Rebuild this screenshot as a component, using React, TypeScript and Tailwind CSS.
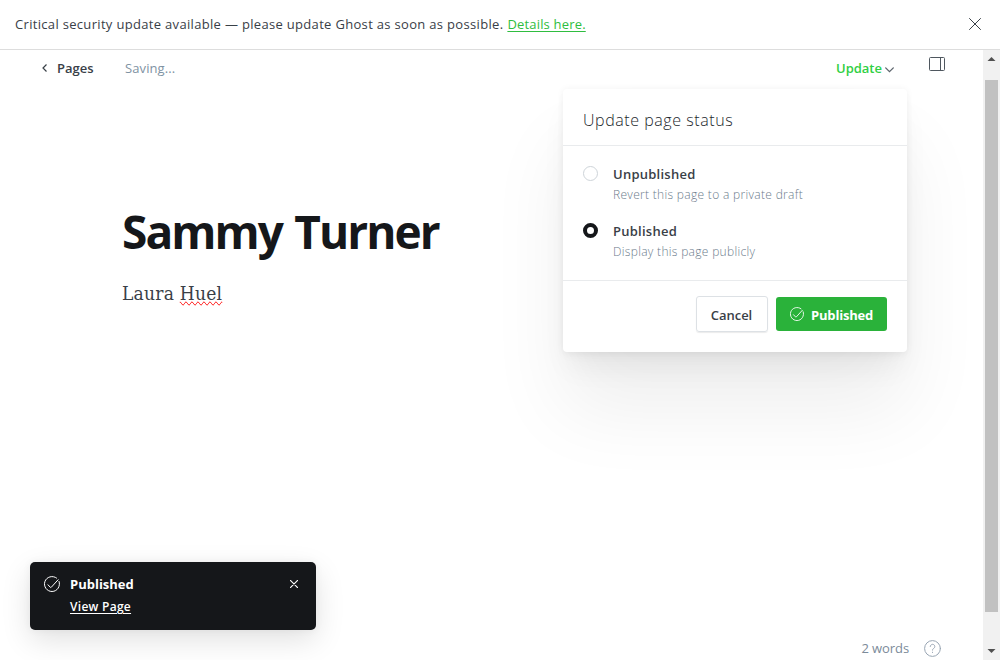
import React from "react";

function CheckCircle({ className }: { className: string }) {
  return (
    <svg viewBox="0 0 24 24" fill="none" stroke="currentColor" strokeWidth="1.5" strokeLinecap="round" strokeLinejoin="round" className={className}>
      <path d="M6 13.2 9.4 16.9a1 1 0 0 0 1.5 0L21.2 5.6" />
      <path d="M22.6 8.2A11.25 11.25 0 1 1 18.9 3.1" />
    </svg>
  );
}

function Cross({ className }: { className: string }) {
  return (
    <svg viewBox="0 0 12 12" fill="none" stroke="currentColor" strokeLinecap="round" className={className}>
      <path d="M.5.5 11.5 11.5M11.5.5.5 11.5" />
    </svg>
  );
}

function Banner() {
  return (
    <div className="flex h-[50px] shrink-0 items-center border-b border-[#dddddd] pl-[15px] pr-[19px] text-[13px] text-[#394047]">
      <p className="-mt-[2px] flex gap-[4px] whitespace-nowrap leading-5">
        <span className="tracking-[0.32px]">Critical security update available — please update Ghost as soon as possible.</span>
        <a className="tracking-[0.18px] text-[#2fbd40] underline underline-offset-2">Details here.</a>
      </p>
      <Cross className="-mt-px ml-auto h-3 w-3 text-[#394047]" />
    </div>
  );
}

function Option({ title, note, checked }: { title: string; note: string; checked?: boolean }) {
  return (
    <div className="flex h-[57px]">
      <span className={checked ? "mt-[1px] h-[15px] w-[15px] rounded-full border-[4px] border-[#15171a]" : "mt-[1px] h-[15px] w-[15px] rounded-full border border-[#ced4d9]"} />
      <div className="ml-[15px] whitespace-nowrap">
        <div className="text-[13px] font-semibold leading-[18px] tracking-[0.25px] text-[#394047]">{title}</div>
        <div className="mt-[3px] text-[12px] font-light leading-[18px] tracking-[0.31px] text-[#6c7c8c]">{note}</div>
      </div>
    </div>
  );
}

function StatusMenu() {
  return (
    <div className="absolute left-[563px] top-[39px] h-[263px] w-[344px] rounded-[4px] bg-white shadow-[0_0_7px_rgba(0,0,0,0.05),0_5px_10px_rgba(0,0,0,0.025),0_20px_28px_-6px_rgba(0,0,0,0.06),0_58px_80px_rgba(0,0,0,0.065)]">
      <div className="flex h-[57px] items-center border-b border-[#e9ebed] px-5 pt-[5px] text-[16px] font-light tracking-[0.56px] text-[#22272c]">Update page status</div>
      <div className="h-[135px] border-b border-[#e9ebed] px-5 pt-[19px]">
        <Option title="Unpublished" note="Revert this page to a private draft" />
        <Option title="Published" note="Display this page publicly" checked />
      </div>
      <div className="flex justify-end gap-2 px-5 pt-[15px]">
        <button className="h-9 w-[72px] rounded-[3px] border border-[#dde1e5] pr-px pt-[4px] text-[13px] font-semibold tracking-[-0.03px] text-[#394047] shadow-[0_1px_1px_rgba(0,0,0,0.08)]">Cancel</button>
        <button className="mt-px flex h-[34px] w-[111px] items-center rounded-[3px] bg-[#2ab23a] pl-[14px] text-[13px] font-bold tracking-[-0.18px] text-white">
          <CheckCircle className="mr-[7px] h-[14px] w-[14px]" />
          <span className="mt-[3px]">Published</span>
        </button>
      </div>
    </div>
  );
}

function Toolbar() {
  return (
    <div className="flex h-[36px] items-center pl-[42px] pr-[38px] text-[13px] leading-5">
      <svg viewBox="0 0 5 8" className="mr-[10px] h-2 w-[5px]" fill="none" stroke="#394047" strokeWidth="1.2"><path d="M4.5.5 1 4l3.500 3.500" /></svg>
      <span className="w-[68px] font-semibold text-[#394047]">Pages</span>
      <span className="tracking-[0.1px] text-[#8092a3]">Saving...</span>
      <span className="ml-auto font-semibold text-[#30cf43]">Update</span>
      <svg viewBox="0 0 9 6" className="ml-[3px] mt-[4px] h-[6px] w-[9px]" fill="none" stroke="#5d656d" strokeWidth="1.3" strokeLinecap="round"><path d="M.7.9 4.500 4.700 8.300.9" /></svg>
      <svg viewBox="0 0 16 14" className="ml-[35px] mb-[8px] h-[14px] w-4" fill="none" stroke="#4f575f"><rect x=".5" y=".5" width="15" height="13" rx="1" /><path d="M11.500.5v13" /></svg>
    </div>
  );
}

function Toast() {
  return (
    <div className="absolute bottom-[30px] left-[30px] flex h-[68px] w-[286px] rounded-[5px] bg-[#15171a] pl-[14px] pt-[14px] text-white shadow-[0_0_8px_rgba(0,0,0,0.05),0_10px_30px_rgba(0,0,0,0.12)]">
      <CheckCircle className="h-4 w-4" />
      <div className="-mt-px ml-[10px] whitespace-nowrap text-[13px] leading-[18px]">
        <div className="font-bold">Published</div>
        <a className="mt-[5px] block text-[12px] font-semibold tracking-[0.28px] underline underline-offset-2">View Page</a>
      </div>
      <svg viewBox="0 0 8 8" className="ml-auto mr-[18px] mt-1 h-2 w-2" fill="none" stroke="currentColor" strokeWidth="1.15" strokeLinecap="round"><path d="m.4.4 7.200 7.200M7.600.4.4 7.600" /></svg>
    </div>
  );
}

function Scrollbar() {
  return (
    <div className="flex w-[17px] shrink-0 flex-col items-center bg-[#f1f1f1]">
      <svg viewBox="0 0 17 30" className="h-[30px] w-[17px]"><path d="M4.500 11h8l-4-4z" fill="#505050" /></svg>
      <div className="h-[532px] w-[13px] bg-[#c1c1c1]" />
      <svg viewBox="0 0 17 10" className="mb-[4px] mt-auto h-[10px] w-[17px]"><path d="M4.500 3h8l-4 4z" fill="#505050" /></svg>
    </div>
  );
}

export default function App() {
  return (
    <div className="flex h-[660px] w-[1000px] flex-col overflow-hidden bg-white font-['Open_Sans','Noto_Sans',sans-serif]">
      <Banner />
      <div className="flex min-h-0 flex-1">
        <main className="relative flex min-w-0 flex-1 flex-col overflow-hidden">
          <Toolbar />
          <div className="px-[122px] pt-[114px]">
            <h1 className="whitespace-nowrap text-[46px] font-bold leading-[62px] tracking-[-1.9px] text-[#15171a] [word-spacing:2px]">Sammy Turner</h1>
            <p className="mt-[17px] font-['DejaVu_Serif_Condensed','DejaVu_Serif',serif] text-[19px] leading-[28px] tracking-[0.24px] text-[#394047]">
              Laura <span className="[text-decoration-line:spelling-error]">Huel</span>
            </p>
          </div>
          <footer className="mt-auto flex h-6 items-center justify-end pr-[42px] text-[13px] text-[#7c8b9a]">
            <span className="mr-[15px] mt-px tracking-[-0.08px]">2 words</span>
            <svg viewBox="0 0 17 17" className="h-[17px] w-[17px]" fill="none" stroke="#98a5b3" strokeLinecap="round"><circle cx="8.500" cy="8.500" r="7.900" /><path d="M6.200 6.500a2.300 2.200 0 1 1 3.500 1.900c-.8.5-1.200.8-1.200 1.700M8.500 12.200v.3" /></svg>
          </footer>
          <StatusMenu />
          <Toast />
        </main>
        <Scrollbar />
      </div>
    </div>
  );
}
